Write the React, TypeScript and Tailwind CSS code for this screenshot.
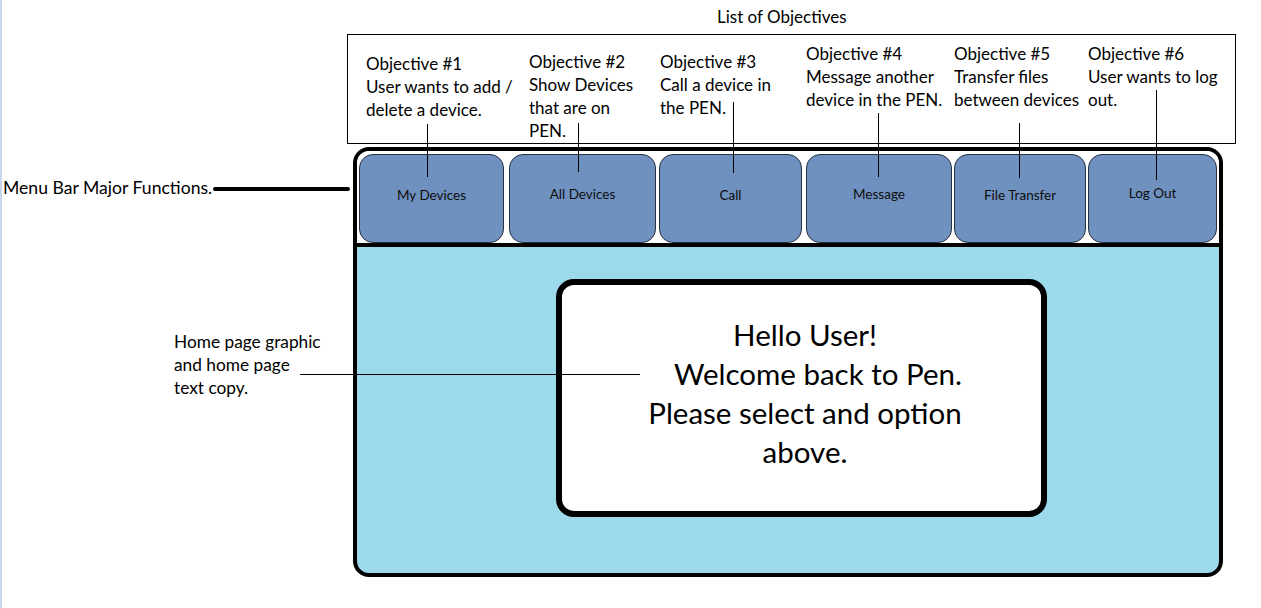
import React from "react";

const objectives = [
  { w: 163, mt: 17, lines: ["Objective #1", "User wants to add /", "delete a device."] },
  { w: 131, mt: 15, lines: ["Objective #2", "Show Devices", "that are on", "PEN."] },
  { w: 146, mt: 15, lines: ["Objective #3", "Call a device in", "the PEN."] },
  { w: 148, mt: 7, lines: ["Objective #4", "Message another", "device in the PEN."] },
  { w: 134, mt: 7, lines: ["Objective #5", "Transfer files", "between devices"] },
  { w: 140, mt: 7, lines: ["Objective #6", "User wants to log", "out."] },
];

const buttons = [
  { label: "My Devices", w: "w-[145px]", ml: "ml-[2px]", pb: "pb-[6px]" },
  { label: "All Devices", w: "w-[147px]", ml: "ml-[5px]", pb: "pb-[8px]" },
  { label: "Call", w: "w-[143px]", ml: "ml-[3px]", pb: "pb-[6px]" },
  { label: "Message", w: "w-[146px]", ml: "ml-[4px]", pb: "pb-[8px]" },
  { label: "File Transfer", w: "w-[132px]", ml: "ml-[2px]", pb: "pb-[6px]" },
  { label: "Log Out", w: "w-[129px]", ml: "ml-[2px]", pb: "pb-[10px]" },
];

const connectors = [
  { left: 425, top: 124, h: 53 },
  { left: 576, top: 123, h: 49 },
  { left: 731, top: 102, h: 71 },
  { left: 876, top: 113, h: 64 },
  { left: 1017, top: 123, h: 55 },
  { left: 1154, top: 90, h: 90 },
];

export default function App() {
  return (
    <div
      className="relative w-[1261px] h-[608px] overflow-hidden bg-white border-l-2 border-[#c8d5e8] text-black"
      style={{ fontFamily: "Lato, 'Open Sans', sans-serif" }}
    >
      <div className="ml-[715px] pt-[7px] text-[17px] leading-[20px] whitespace-nowrap">List of Objectives</div>

      <div className="ml-[345px] mt-[7px] w-[889px] h-[110px] border border-black flex items-start pl-[18px]">
        {objectives.map((o, i) => (
          <div
            key={i}
            className="shrink-0 text-[17px] leading-[23px] whitespace-nowrap"
            style={{ width: o.w, marginTop: o.mt }}
          >
            {o.lines.map((l, j) => (
              <div key={j}>{l}</div>
            ))}
          </div>
        ))}
      </div>

      <div className="ml-[351px] mt-[3px] w-[870px] h-[430px] border-4 border-black rounded-[16px] bg-[#9cd9ea] overflow-hidden flex flex-col">
        <div className="h-[96px] shrink-0 bg-white border-b-4 border-black flex items-start pt-[3px]">
          {buttons.map((b) => (
            <div
              key={b.label}
              className={`${b.w} ${b.ml} ${b.pb} h-[89px] shrink-0 rounded-[14px] border border-[#27313f] bg-[#6f91bf] flex items-center justify-center text-[13.5px] text-[#0d0d0d]`}
            >
              {b.label}
            </div>
          ))}
        </div>
        <div className="flex-1 pl-[199px] pt-[32px]">
          <div className="w-[491px] h-[238px] border-[6px] border-black rounded-[18px] bg-white pt-[30px] pl-[7px] text-center text-[29.5px] leading-[39px]">
            <div>Hello User!</div>
            <div className="pl-[26px]">Welcome back to Pen.</div>
            <div>Please select and option</div>
            <div>above.</div>
          </div>
        </div>
      </div>

      {/* annotations */}
      <div className="absolute left-[1px] top-[178px] text-[17.6px] leading-[20px] whitespace-nowrap">
        Menu Bar Major Functions.
      </div>
      <div className="absolute left-[211px] top-[187px] w-[137px] h-[4px] rounded-full bg-black" />

      <div className="absolute left-[172px] top-[330px] text-[17.3px] leading-[23px] whitespace-nowrap">
        <div>Home page graphic</div>
        <div>and home page</div>
        <div>text copy.</div>
      </div>
      <div className="absolute left-[298px] top-[374px] w-[340px] h-px bg-black" />

      {connectors.map((c, i) => (
        <div
          key={i}
          className="absolute w-px bg-black"
          style={{ left: c.left, top: c.top, height: c.h }}
        />
      ))}
    </div>
  );
}
